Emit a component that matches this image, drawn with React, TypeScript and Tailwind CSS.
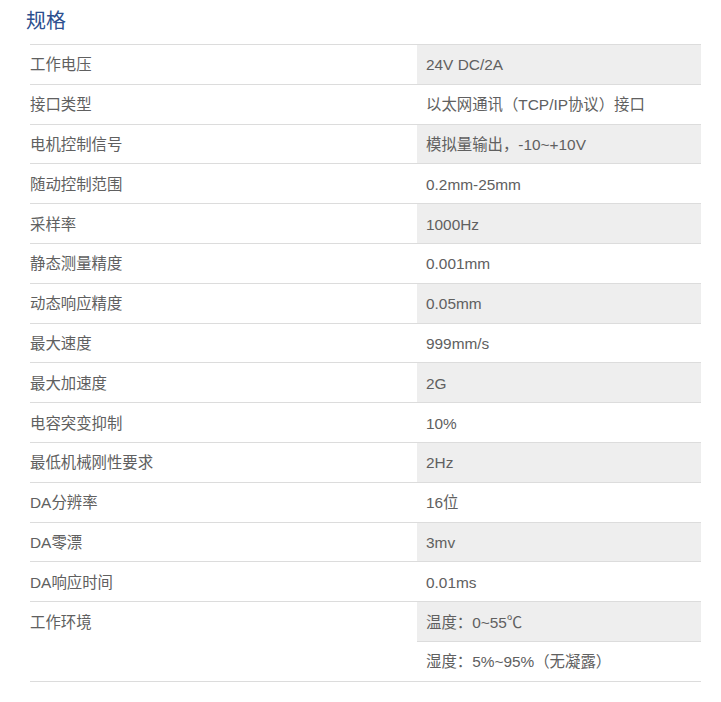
import React from "react";

const rows: [string, string][] = [
  ["工作电压", "24V DC/2A"],
  ["接口类型", "以太网通讯（TCP/IP协议）接口"],
  ["电机控制信号", "模拟量输出，-10~+10V"],
  ["随动控制范围", "0.2mm-25mm"],
  ["采样率", "1000Hz"],
  ["静态测量精度", "0.001mm"],
  ["动态响应精度", "0.05mm"],
  ["最大速度", "999mm/s"],
  ["最大加速度", "2G"],
  ["电容突变抑制", "10%"],
  ["最低机械刚性要求", "2Hz"],
  ["DA分辨率", "16位"],
  ["DA零漂", "3mv"],
  ["DA响应时间", "0.01ms"],
];

const font = { fontFamily: '"Liberation Sans", "Noto Sans CJK SC", sans-serif' };

export default function App() {
  return (
    <div className="w-[721px] h-[702px] bg-white" style={font}>
      <div className="pl-[26px] pt-[7px] h-[44px] text-[20px] leading-[29px] text-[#2d4f8f]">规格</div>
      <div className="ml-[30px] w-[671px] border-t border-[#dcdcdc] text-[15.4px] text-[#606060]">
        {rows.map(([k, v], i) => (
          <div key={k} className="flex h-[39.8px] border-b border-[#dcdcdc]">
            <div className="w-[387px] flex items-center pt-[1px]">{k}</div>
            <div className={`flex-1 flex items-center pt-[1px] pl-[9px] ${i % 2 === 0 ? "bg-[#eeeeee]" : "bg-white"}`}>{v}</div>
          </div>
        ))}
        <div className="flex border-b border-[#dcdcdc]">
          <div className="w-[387px] h-[39.8px] flex items-center pt-[1px]">工作环境</div>
          <div className="flex-1 flex flex-col">
            <div className="h-[39.8px] flex items-center pt-[1px] pl-[9px] bg-[#eeeeee] border-b border-[#dcdcdc]">温度：0~55℃</div>
            <div className="h-[38.8px] flex items-center pt-[1px] pl-[9px]">湿度：5%~95%（无凝露）</div>
          </div>
        </div>
      </div>
    </div>
  );
}
